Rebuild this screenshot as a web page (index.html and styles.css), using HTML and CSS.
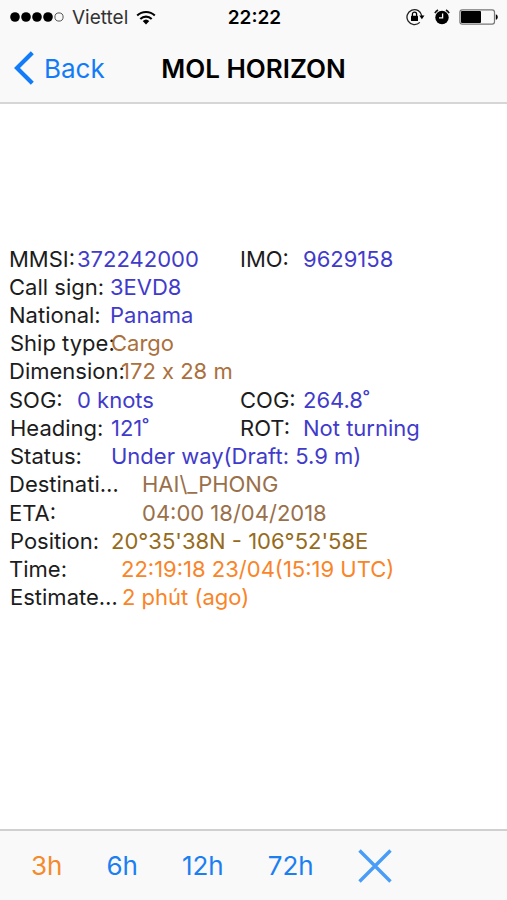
FILE: index.html
```html
<!DOCTYPE html>
<html lang="en">
<head>
<meta charset="utf-8">
<meta name="viewport" content="width=device-width, initial-scale=1">
<title>MOL HORIZON</title>
<link rel="stylesheet" href="styles.css">
</head>
<body>
<header class="top">
  <div class="statusbar">
    <div class="carrier">
      <svg class="signal" width="54" height="12" viewBox="0 0 54 12" aria-hidden="true">
        <circle cx="5" cy="6" r="4.8"/><circle cx="16" cy="6" r="4.8"/><circle cx="27" cy="6" r="4.8"/><circle cx="38" cy="6" r="4.8"/>
        <circle cx="49" cy="6" r="4.1" fill="none" stroke="#555" stroke-width="1"/>
      </svg>
      <span>Viettel</span>
      <svg class="wifi" width="20" height="15" viewBox="0 0 20 15" aria-hidden="true">
        <path d="M1.2 5.6a12.6 12.6 0 0 1 17.6 0M4.3 8.9a8.2 8.2 0 0 1 11.4 0" fill="none" stroke="#000" stroke-width="2.1"/>
        <path d="M10 14.4 6.7 11.1a4.8 4.8 0 0 1 6.6 0z"/>
      </svg>
    </div>
    <time class="clock">22:22</time>
    <div class="indicators">
      <svg width="19" height="18" viewBox="0 0 19 18" aria-hidden="true">
        <path d="M13.8 14.4A7.5 7.5 0 1 1 15.9 8" fill="none" stroke="#222" stroke-width="1.3"/>
        <path d="M13.3 7.6h5.2l-2.6 3.6z"/>
        <rect x="5" y="7.8" width="7" height="5.2" rx=".6"/>
        <path d="M6.4 8V6.3a2.1 2.1 0 0 1 4.2 0V8" fill="none" stroke="#000" stroke-width="1.3"/>
      </svg>
      <svg width="16" height="18" viewBox="0 0 16 18" aria-hidden="true">
        <circle cx="8" cy="9.5" r="6.7"/>
        <path d="M.9 5.2A8 8 0 0 1 4 2M15.1 5.2A8 8 0 0 0 12 2" fill="none" stroke="#111" stroke-width="1.6"/>
        <path d="M8.6 5.4v4.5H5" fill="none" stroke="#f9f9f9" stroke-width="1.3"/>
      </svg>
      <svg width="40" height="16" viewBox="0 0 40 16" aria-hidden="true">
        <rect x=".9" y=".9" width="34.6" height="14.2" rx="2.4" fill="none" stroke="#777" stroke-width="1.2"/>
        <rect x="2" y="2" width="20" height="12" rx="1"/>
        <path d="M36.8 5.2c2.6.8 2.6 4.8 0 5.6z"/>
      </svg>
    </div>
  </div>
  <nav class="navbar">
    <a class="back" href="#back">
      <svg width="20" height="34" viewBox="0 0 20 34" aria-hidden="true"><path d="M18.3 1.8 3 17l15.3 15.2" fill="none" stroke="currentColor" stroke-width="4.2"/></svg>
      <span>Back</span>
    </a>
    <h1 class="title">MOL HORIZON</h1>
  </nav>
</header>

<main class="details">
  <dl class="group">
    <div class="row split">
      <div class="pair short"><dt>MMSI:</dt><dd class="blue">372242000</dd></div>
      <div class="pair second"><dt>IMO:</dt><dd class="blue">9629158</dd></div>
    </div>
    <div class="row pair"><dt>Call sign:</dt><dd class="blue">3EVD8</dd></div>
    <div class="row pair"><dt>National:</dt><dd class="blue">Panama</dd></div>
    <div class="row pair inset"><dt>Ship type:</dt><dd class="brown">Cargo</dd></div>
    <div class="row pair wide"><dt>Dimension:</dt><dd class="brown size">172 x 28 m</dd></div>
  </dl>
  <dl class="group">
    <div class="row split">
      <div class="pair short"><dt>SOG:</dt><dd class="blue">0 knots</dd></div>
      <div class="pair second"><dt>COG:</dt><dd class="blue">264.8˚</dd></div>
    </div>
    <div class="row split">
      <div class="pair inset"><dt>Heading:</dt><dd class="blue">121˚</dd></div>
      <div class="pair second"><dt>ROT:</dt><dd class="blue">Not turning</dd></div>
    </div>
    <div class="row pair inset"><dt>Status:</dt><dd class="blue">Under way(Draft: 5.9 m)</dd></div>
    <div class="row pair far"><dt class="clip">Destination:</dt><dd class="umber">HAI\_PHONG</dd></div>
  </dl>
  <dl class="group">
    <div class="row pair far"><dt>ETA:</dt><dd class="umber">04:00 18/04/2018</dd></div>
    <div class="row pair inset"><dt>Position:</dt><dd class="olive">20°35'38N - 106°52'58E</dd></div>
    <div class="row pair wide"><dt>Time:</dt><dd class="orange">22:19:18 23/04(15:19 UTC)</dd></div>
    <div class="row pair wide inset"><dt class="clip">Estimated:</dt><dd class="orange">2 phút (ago)</dd></div>
  </dl>
</main>

<footer class="toolbar">
  <button class="range active" type="button">3h</button>
  <button class="range" type="button">6h</button>
  <button class="range" type="button">12h</button>
  <button class="range" type="button">72h</button>
  <button class="close" type="button" aria-label="Close">
    <svg width="34" height="34" viewBox="0 0 34 34" aria-hidden="true"><path d="M1.5 1.5l31 31M32.5 1.5l-31 31" fill="none" stroke="currentColor" stroke-width="3.4"/></svg>
  </button>
</footer>
</body>
</html>
```
FILE: styles.css
```css
* {
  box-sizing: border-box;
}

body {
  margin: 0;
  min-height: 100vh;
  display: flex;
  flex-direction: column;
  background: #fff;
  color: #1c1c1c;
  font-family: Inter, "Liberation Sans", sans-serif;
  font-size: 22px;
}

svg {
  display: block;
  flex: none;
}

.top {
  background: #f9f9f9;
  border-bottom: 2px solid #d6d6d6;
}

.statusbar {
  display: grid;
  grid-template-columns: 1fr auto 1fr;
  align-items: center;
  height: 34px;
  padding: 0 8px 0 10px;
  color: #000;
  font-size: 19px;
}

.carrier {
  display: flex;
  align-items: center;
  gap: 8px;
  color: #333;
}

.clock {
  font-weight: 600;
}

.indicators {
  display: flex;
  align-items: center;
  justify-content: flex-end;
  gap: 9px;
}

.navbar {
  display: grid;
  grid-template-columns: 1fr auto 1fr;
  align-items: center;
  height: 68px;
  padding: 0 14px;
}

.back {
  display: flex;
  align-items: center;
  gap: 10px;
  color: #127cf8;
  font-size: 26px;
  text-decoration: none;
}

.title {
  margin: 0;
  color: #000;
  font-size: 26px;
  font-weight: 600;
}

.details {
  flex: 1;
  display: flex;
  flex-direction: column;
  gap: 1px;
  padding: 141px 9px 24px;
}

.group,
dd {
  margin: 0;
}

.row {
  line-height: 28px;
}

.split {
  display: grid;
  grid-template-columns: 231px 1fr;
}

.pair {
  display: flex;
  white-space: nowrap;
}

dt {
  flex: 0 0 101px;
  min-width: 0;
}

.short dt {
  flex-basis: 68px;
}

.second dt {
  flex-basis: 63px;
}

.wide dt {
  flex-basis: 112px;
}

.far dt {
  flex-basis: 133px;
}

.inset {
  padding-left: 1px;
}

.clip {
  overflow: hidden;
  padding-right: 4px;
  text-overflow: ellipsis;
}

.far .clip {
  padding-right: 20px;
}

/* Keeps the "x" between digits a plain letter. */
.size {
  font-feature-settings: "calt" 0;
}

.blue {
  color: #413bcb;
}

.brown {
  color: #ab703c;
}

.umber {
  color: #99704a;
}

.olive {
  color: #966b1c;
}

.orange {
  color: #fa8428;
}

.toolbar {
  display: flex;
  align-items: center;
  gap: 44px;
  height: 71px;
  padding: 0 31px;
  background: #f9f9f9;
  border-top: 2px solid #d0d0d0;
}

.range,
.close {
  padding: 0;
  border: 0;
  background: none;
  color: #1b7ff2;
  font: inherit;
  font-size: 26px;
  cursor: pointer;
}

.active {
  color: #f58a2c;
}

.close {
  color: #4a9df6;
}
```
